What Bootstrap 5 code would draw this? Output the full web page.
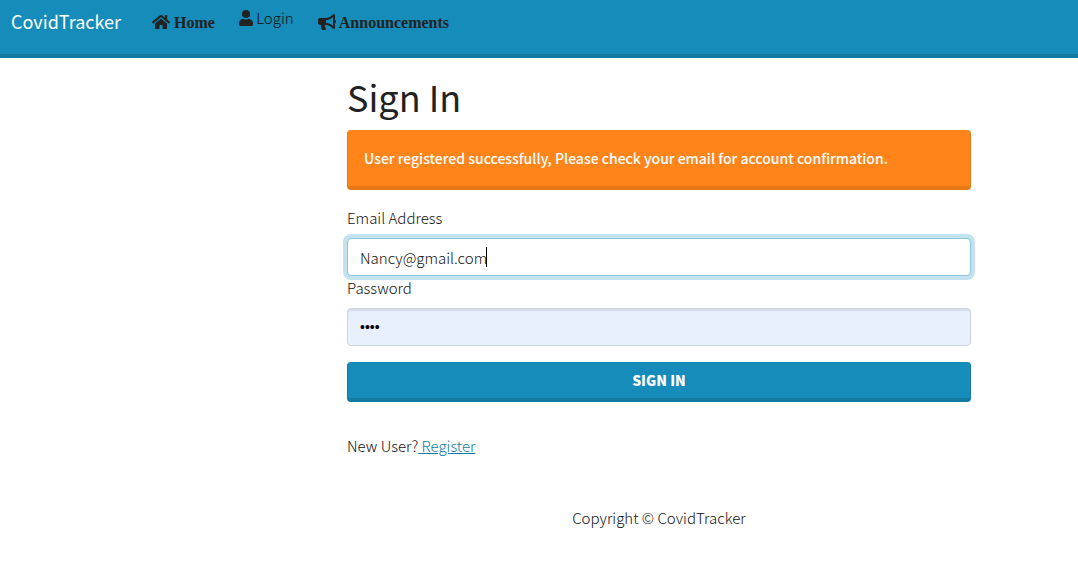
<!DOCTYPE html>
<html lang="en">
<head>
<meta charset="utf-8">
<meta name="viewport" content="width=device-width, initial-scale=1">
<title>CovidTracker - Sign In</title>
<link href="https://cdn.jsdelivr.net/npm/bootstrap@5.3.0/dist/css/bootstrap.min.css" rel="stylesheet">
<style>
  body {
    --brand: #158cba;
    --brand-dark: #127ba3;
    font-family: "Noto Sans CJK SC", "Noto Sans", sans-serif;
    font-size: 15px;
    font-weight: 300;
    line-height: 24px;
    color: #111;
  }
  .site-nav {
    --bs-navbar-nav-link-padding-x: 12px;
    align-items: flex-start;
    min-height: 58px;
    padding: 0 11px;
    background: var(--brand);
    border-bottom: 4px solid var(--brand-dark);
  }
  .site-nav .navbar-brand { margin: 6px 19px 0 0; padding: 0; font-size: 18px; font-weight: 400; line-height: 30px; color: #fff; }
  .site-nav .nav-link { padding-top: 6px; color: #111; line-height: 24px; font-weight: 300; }
  .site-nav .nav-link.nav-strong { padding-top: 11px; color: #222; font: bold 16px/24px "Liberation Serif", serif; }
  .site-nav svg { display: inline-block; height: 16px; fill: #222; vertical-align: -2px; }
  .page-body { padding: 14px 107px 0 23px; }
  h1 { margin: 0 0 10px; font-size: 36px; line-height: 48px; font-weight: 400; color: #222; }
  .alert-notice {
    margin-bottom: 16px;
    padding: 16px;
    background: #ff851b;
    border: 1px solid #e67818;
    border-width: 0 1px 4px;
    border-radius: 4px;
    color: #fff;
    font-size: 14px;
    line-height: 24px;
    font-weight: 500;
  }
  .form-label { margin-bottom: 8px; }
  .form-control {
    height: 38px;
    padding: 4px 12px;
    font-size: 15px;
    font-weight: 300;
    line-height: 24px;
    color: #111;
    border: 1px solid #ced4da;
    border-radius: 4px;
    box-shadow: inset 0 2px 0 rgba(0, 0, 0, .075);
  }
  .form-control:focus, .form-control.is-current {
    color: #111;
    border-color: #8ac6dd;
    box-shadow: 0 0 0 4px #c4e2ee;
    caret-color: transparent;
  }
  .text-caret { position: absolute; top: 9px; left: 139px; width: 1px; height: 20px; background: #000; }
  .form-control.is-filled { background: #e8f0fe; color: #000; font-family: "Liberation Sans", sans-serif; font-size: 14px; }
  .btn-brand {
    height: 40px;
    padding: 0;
    background: var(--brand);
    border: 1px solid var(--brand-dark);
    border-width: 0 1px 4px;
    border-radius: 4px;
    color: #fff;
    font-size: 14px;
    font-weight: 900;
    line-height: 36px;
    text-transform: uppercase;
  }
  .page-body a { color: #127ba3; }
</style>
</head>
<body>
<nav class="navbar navbar-expand site-nav">
  <a class="navbar-brand" href="#">CovidTracker</a>
  <ul class="navbar-nav">
    <li class="nav-item"><a class="nav-link nav-strong" href="#"><svg width="18" viewBox="0 0 576 512" aria-hidden="true"><path d="M280 148 96 300v164a16 16 0 0 0 16 16h112a16 16 0 0 0 16-16v-96a16 16 0 0 1 16-16h64a16 16 0 0 1 16 16v96a16 16 0 0 0 16 16h112a16 16 0 0 0 16-16V300L296 148a12 12 0 0 0-16 0zm292 103-84-69V44a12 12 0 0 0-12-12h-56a12 12 0 0 0-12 12v72l-90-74a48 48 0 0 0-61 0L4 251a12 12 0 0 0-1 17l25 31a12 12 0 0 0 17 2l235-194a12 12 0 0 1 16 0l235 194a12 12 0 0 0 17-2l25-31a12 12 0 0 0-1-17z"/></svg> Home</a></li>
    <li class="nav-item"><a class="nav-link" href="#"><svg width="14" viewBox="0 0 448 512" aria-hidden="true"><path d="M224 256a128 128 0 1 0 0-256 128 128 0 0 0 0 256zm90 32h-17a174 174 0 0 1-146 0h-17A134 134 0 0 0 0 422v42a48 48 0 0 0 48 48h352a48 48 0 0 0 48-48v-42a134 134 0 0 0-134-134z"/></svg> Login</a></li>
    <li class="nav-item"><a class="nav-link nav-strong" href="#"><svg width="18" viewBox="0 0 576 512" aria-hidden="true"><path d="M576 240c0-24-13-44-32-55V32c0-9-7-32-32-32a32 32 0 0 0-20 7l-85 68a242 242 0 0 1-151 53H64a64 64 0 0 0-64 64v96a64 64 0 0 0 64 64h34c-2 10-2 21-2 32 0 40 9 78 26 111 5 11 16 17 28 17h74c26 0 42-30 26-51a128 128 0 0 1-24-109h30c54 0 108 19 151 53l85 68a32 32 0 0 0 20 7c25 0 32-22 32-32V295c19-11 32-31 32-55zm-96 141-33-26a306 306 0 0 0-191-67v-96c70 0 137-24 191-67l33-26v282z"/></svg> Announcements</a></li>
  </ul>
</nav>
<main class="page-body">
  <div class="row">
    <div class="col-8 offset-4">
      <h1>Sign In</h1>
      <div class="alert alert-notice" role="alert">User registered successfully, Please check your email for account confirmation.</div>
      <form>
        <label class="form-label d-block" for="email">Email Address</label>
        <div class="position-relative">
          <input class="form-control is-current" id="email" type="email" value="Nancy@gmail.com" autofocus>
          <span class="text-caret" aria-hidden="true"></span>
        </div>
        <label class="form-label d-block" for="password">Password</label>
        <input class="form-control is-filled mb-3" id="password" type="password" value="1234">
        <button class="btn btn-brand w-100" type="submit">Sign In</button>
      </form>
      <p class="mt-4 pt-2 mb-5">New User?<a href="#"> Register</a></p>
      <footer class="text-center">Copyright © CovidTracker</footer>
    </div>
  </div>
</main>
<script src="https://cdn.jsdelivr.net/npm/bootstrap@5.3.0/dist/js/bootstrap.bundle.min.js"></script>
</body>
</html>
